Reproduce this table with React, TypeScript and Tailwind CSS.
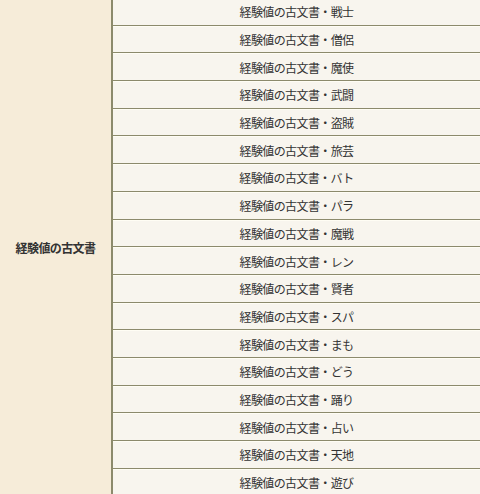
const jobs = [
  "戦士",
  "僧侶",
  "魔使",
  "武闘",
  "盗賊",
  "旅芸",
  "バト",
  "パラ",
  "魔戦",
  "レン",
  "賢者",
  "スパ",
  "まも",
  "どう",
  "踊り",
  "占い",
  "天地",
  "遊び",
];

export default function App() {
  return (
    <div className="h-[494px] w-[480px] overflow-hidden bg-[#f8f5ee] font-['Noto_Sans_CJK_JP',sans-serif] text-[#333]">
      <div className="-mt-[2px] flex">
        <div className="flex w-[113px] shrink-0 items-center justify-center border-r-2 border-[#8c8a6c] bg-[#f6ecd9] pt-[1px] text-[12px] font-bold tracking-[-0.6px]">
          経験値の古文書
        </div>
        <div className="flex-1">
          {jobs.map((job) => (
            <div
              key={job}
              className="flex h-[27.7px] items-center justify-center border-b border-[#8c8a6c] bg-[#f8f5ee] pt-[2px] text-[12px] tracking-[-0.6px] shadow-[inset_0_1px_0_#fffdf4]"
            >
              経験値の古文書・{job}
            </div>
          ))}
        </div>
      </div>
    </div>
  );
}
